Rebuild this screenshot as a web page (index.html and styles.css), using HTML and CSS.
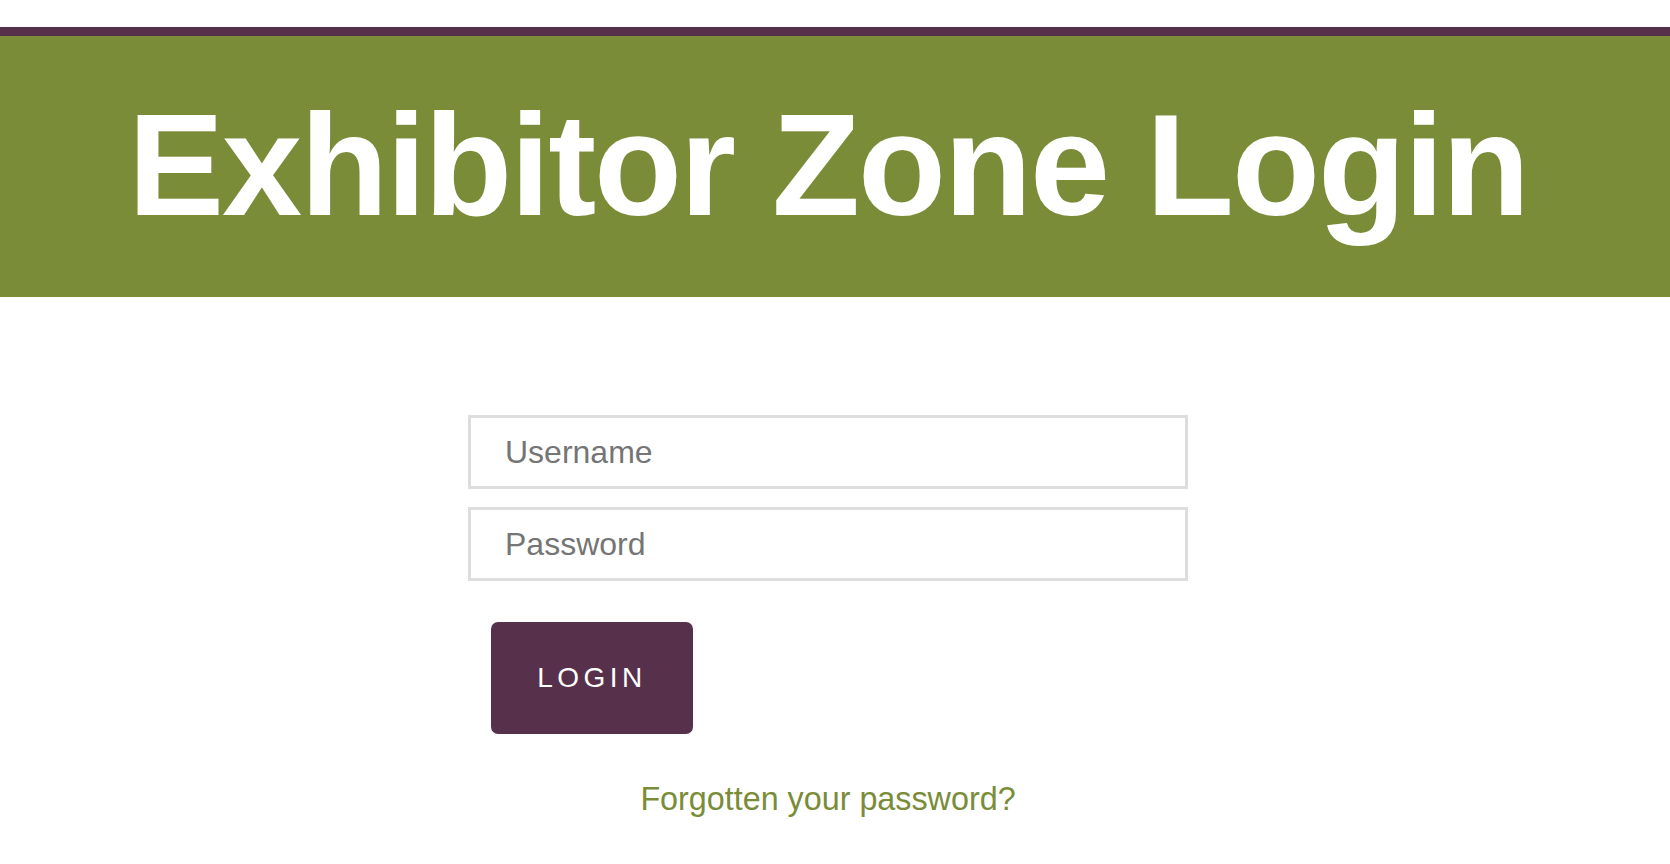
FILE: index.html
```html
<!DOCTYPE html>
<html lang="en">
<head>
<meta charset="utf-8">
<title>Exhibitor Zone Login</title>
<link rel="stylesheet" href="styles.css">
</head>
<body>
<header class="banner">
  <h1 class="banner-title">Exhibitor Zone Login</h1>
</header>
<main class="content">
  <form class="login-form">
    <input class="field" type="text" placeholder="Username">
    <input class="field" type="password" placeholder="Password">
    <div class="actions">
      <button class="login-btn" type="button">LOGIN</button>
    </div>
    <a class="forgot" href="#">Forgotten your password?</a>
  </form>
</main>
</body>
</html>
```
FILE: styles.css
```css
html, body {
  margin: 0;
  padding: 0;
  background: #ffffff;
  font-family: "Liberation Sans", Arial, Helvetica, sans-serif;
}

body {
  padding-top: 27px;
}

.banner {
  border-top: 9px solid #56304b;
  background: #7a8c37;
  height: 261px;
  box-sizing: content-box;
  padding-right: 14px;
}

.banner-title {
  margin: 0;
  padding-top: 58px;
  font-size: 144px;
  line-height: 1;
  font-weight: 700;
  letter-spacing: -2px;
  color: #ffffff;
  text-align: center;
}

.content {
  padding-right: 14px;
  padding-top: 118px;
}

.login-form {
  width: 720px;
  margin: 0 auto;
  display: flex;
  flex-direction: column;
}

.field {
  box-sizing: border-box;
  width: 720px;
  height: 74px;
  margin: 0 0 18px 0;
  padding: 0 0 0 34px;
  border: 3px solid #dddddd;
  border-radius: 0;
  outline: none;
  font-family: "Liberation Sans", Arial, Helvetica, sans-serif;
  font-size: 32px;
  color: #333333;
  background: #ffffff;
}

.field::placeholder {
  color: #757575;
  opacity: 1;
}

.actions {
  padding-left: 23px;
  padding-top: 23px;
}

.login-btn {
  width: 202px;
  height: 112px;
  border: none;
  border-radius: 7px;
  background: #57314c;
  color: #ffffff;
  font-family: "Liberation Sans", Arial, Helvetica, sans-serif;
  font-size: 28px;
  letter-spacing: 4.5px;
  padding: 0;
  cursor: pointer;
}

.forgot {
  align-self: center;
  margin-top: 47px;
  font-size: 32.3px;
  color: #7a8c37;
  text-decoration: none;
}
```
